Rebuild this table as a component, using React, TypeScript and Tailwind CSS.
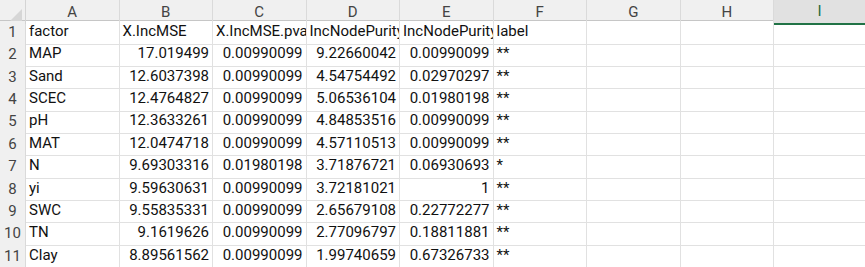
const columns = ['A', 'B', 'C', 'D', 'E', 'F', 'G', 'H', 'I'];

type Cell = { v: string; num?: boolean };

const header: Cell[] = [
  { v: 'factor' },
  { v: 'X.IncMSE' },
  { v: 'X.IncMSE.pval' },
  { v: 'IncNodePurity' },
  { v: 'IncNodePurity.pval' },
  { v: 'label' },
];

const data: string[][] = [
  ['MAP', '17.019499', '0.00990099', '9.22660042', '0.00990099', '**'],
  ['Sand', '12.6037398', '0.00990099', '4.54754492', '0.02970297', '**'],
  ['SCEC', '12.4764827', '0.00990099', '5.06536104', '0.01980198', '**'],
  ['pH', '12.3633261', '0.00990099', '4.84853516', '0.00990099', '**'],
  ['MAT', '12.0474718', '0.00990099', '4.57110513', '0.00990099', '**'],
  ['N', '9.69303316', '0.01980198', '3.71876721', '0.06930693', '*'],
  ['yi', '9.59630631', '0.00990099', '3.72181021', '1', '**'],
  ['SWC', '9.55835331', '0.00990099', '2.65679108', '0.22772277', '**'],
  ['TN', '9.1619626', '0.00990099', '2.77096797', '0.18811881', '**'],
  ['Clay', '8.89561562', '0.00990099', '1.99740659', '0.67326733', '**'],
];

const rows: Cell[][] = [
  header,
  ...data.map((r) => r.map((v, i) => ({ v, num: i >= 1 && i <= 4 }))),
];

const gridCols = 'grid grid-cols-[26px_repeat(8,93.5px)_1fr]';

export default function App() {
  return (
    <div
      className="w-[865px] h-[267px] overflow-hidden bg-white text-[#111] text-[15px]"
      style={{ fontFamily: 'Roboto, "Noto Sans", sans-serif' }}
    >
      {/* column letters */}
      <div className={`${gridCols} h-[21px] bg-[#f0f0f0] border-b border-[#c6c6c6]`}>
        <div className="relative border-r border-[#d4d4d4]">
          <svg className="absolute right-[3px] bottom-[3px]" width="12" height="12" viewBox="0 0 12 12">
            <polygon points="12,0 12,12 0,12" fill="#d6d6d6" />
          </svg>
        </div>
        {columns.map((c) => (
          <div
            key={c}
            className={
              c === 'I'
                ? 'flex items-center justify-center bg-[#e1e1e1] text-[#1e6b40] border-b-2 border-[#217346] -mb-px'
                : 'flex items-center justify-center text-[#444] border-r border-[#dadada]'
            }
          >
            {c}
          </div>
        ))}
      </div>

      {rows.map((row, ri) => (
        <div key={ri} className={`${gridCols} h-[22.36px]`}>
          <div className="flex items-center justify-center bg-[#f0f0f0] text-[#444] border-r border-[#c6c6c6] border-b border-[#dadada]">
            {ri + 1}
          </div>
          {Array.from({ length: 9 }).map((_, ci) => {
            const cell = row[ci];
            return (
              <div
                key={ci}
                className={`flex items-end pb-[1px] overflow-hidden whitespace-nowrap border-b border-[#e1e1e1] ${
                  ci < 8 ? 'border-r' : ''
                } ${cell?.num ? 'justify-end pr-[3px]' : 'pl-[3px]'}`}
              >
                {cell?.v}
              </div>
            );
          })}
        </div>
      ))}
    </div>
  );
}
